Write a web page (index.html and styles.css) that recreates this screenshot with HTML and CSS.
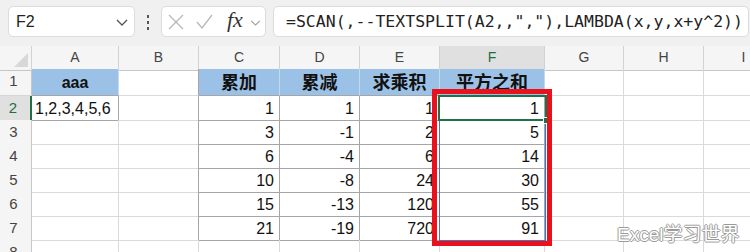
FILE: index.html
```html
<!DOCTYPE html>
<html lang="zh-CN">

<head>
  <meta charset="UTF-8">
  <link rel="stylesheet" href="styles.css">
  <title>SCAN 平方之和</title>
</head>

<body>

  <!-- 编辑栏 -->
  <div class="toolbar">
    <div class="namebox">
      <span>F2</span>
      <svg class="drop" viewBox="0 0 12 7"><polyline points="1,1 6,6 11,1" /></svg>
    </div>
    <div class="grip"><i></i><i></i><i></i></div>
    <div class="fxbox">
      <svg class="fx-x" viewBox="0 0 16 16"><line x1="1" y1="1" x2="15" y2="15" /><line x1="15" y1="1" x2="1" y2="15" /></svg>
      <svg class="fx-ok" viewBox="0 0 17 15"><polyline points="1,8 6,14 16,1" /></svg>
      <span class="fx-label">fx</span>
      <svg class="fx-drop" viewBox="0 0 12 7"><polyline points="1,1 6,6 11,1" /></svg>
    </div>
    <div class="formula">=SCAN(,--TEXTSPLIT(A2,,","),LAMBDA(x,y,x+y^2))</div>
  </div>

  <!-- 工作表 -->
  <div class="sheet">
    <div class="row hdr">
      <div class="corner"><i></i></div>
      <div class="ch">A</div><div class="ch">B</div><div class="ch">C</div><div class="ch">D</div>
      <div class="ch">E</div><div class="ch on">F</div><div class="ch">G</div><div class="ch">H</div><div class="ch">I</div>
    </div>
    <div class="row r1">
      <div class="rh">1</div>
      <div class="c b hd">aaa</div><div class="c edge"></div>
      <div class="c b hd">累加</div><div class="c b hd">累减</div><div class="c b hd">求乘积</div><div class="c b hd">平方之和</div>
      <div class="c"></div><div class="c"></div><div class="c"></div>
    </div>
    <div class="row">
      <div class="rh on">2</div>
      <div class="c t txt">1,2,3,4,5,6</div><div class="c edge"></div>
      <div class="c t n">1</div><div class="c t n">1</div><div class="c t n">1</div><div class="c t n">1</div>
      <div class="c"></div><div class="c"></div><div class="c"></div>
    </div>
    <div class="row">
      <div class="rh">3</div>
      <div class="c"></div><div class="c edge"></div>
      <div class="c t n">3</div><div class="c t n">-1</div><div class="c t n">2</div><div class="c t n">5</div>
      <div class="c"></div><div class="c"></div><div class="c"></div>
    </div>
    <div class="row">
      <div class="rh">4</div>
      <div class="c"></div><div class="c edge"></div>
      <div class="c t n">6</div><div class="c t n">-4</div><div class="c t n">6</div><div class="c t n">14</div>
      <div class="c"></div><div class="c"></div><div class="c"></div>
    </div>
    <div class="row">
      <div class="rh">5</div>
      <div class="c"></div><div class="c edge"></div>
      <div class="c t n">10</div><div class="c t n">-8</div><div class="c t n">24</div><div class="c t n">30</div>
      <div class="c"></div><div class="c"></div><div class="c"></div>
    </div>
    <div class="row">
      <div class="rh">6</div>
      <div class="c"></div><div class="c edge"></div>
      <div class="c t n">15</div><div class="c t n">-13</div><div class="c t n">120</div><div class="c t n">55</div>
      <div class="c"></div><div class="c"></div><div class="c"></div>
    </div>
    <div class="row">
      <div class="rh">7</div>
      <div class="c"></div><div class="c edge"></div>
      <div class="c t n">21</div><div class="c t n">-19</div><div class="c t n">720</div><div class="c t n">91</div>
      <div class="c"></div><div class="c"></div><div class="c"></div>
    </div>
    <div class="row">
      <div class="rh">8</div>
      <div class="c"></div><div class="c"></div><div class="c"></div><div class="c"></div><div class="c"></div>
      <div class="c"></div><div class="c"></div><div class="c"></div><div class="c"></div>
    </div>

    <!-- 溢出区域、选中框和标注 -->
    <div class="spill"></div>
    <div class="selection"><i class="handle"></i></div>
    <div class="mark"></div>
    <div class="watermark">Excel学习世界</div>
  </div>

</body>

</html>
```

FILE: styles.css
```css
body {
  margin: 0;
  font-family: "Liberation Sans", "Noto Sans CJK SC", sans-serif;
  background: #fff;
  overflow: hidden;
}

/* 编辑栏 */
.toolbar {
  display: flex;
  height: 46px;
  box-sizing: border-box;
  padding: 6px 0 0 8px;
  background: #f0f0f0;
}

.namebox,
.fxbox,
.formula {
  height: 31px;
  box-sizing: border-box;
  background: #fff;
  border: 1px solid #dcdcdc;
  border-radius: 5px;
}

.namebox {
  width: 127px;
  display: flex;
  align-items: center;
  justify-content: space-between;
  padding: 0 6px 0 7px;
  font-size: 16px;
  color: #222;
}

.drop {
  width: 12px;
  height: 7px;
  margin-top: 2px;
  fill: none;
  stroke: #555;
  stroke-width: 1.3;
}

.grip {
  width: 26px;
  display: flex;
  flex-direction: column;
  align-items: center;
  padding-top: 9px;
  gap: 3px;
}

.grip i {
  width: 2px;
  height: 3px;
  background: #555;
}

.fxbox {
  width: 105px;
  display: flex;
  align-items: center;
  padding-left: 6px;
}

.fx-x {
  width: 16px;
  height: 16px;
  stroke: #b8b8b8;
  stroke-width: 1.3;
}

.fx-ok {
  width: 17px;
  height: 15px;
  margin-left: 12px;
  fill: none;
  stroke: #b8b8b8;
  stroke-width: 1.3;
}

.fx-label {
  margin-left: 14px;
  font-family: "Liberation Serif", serif;
  font-style: italic;
  font-size: 22px;
  color: #333;
  line-height: 1;
  margin-top: -3px;
}

.fx-drop {
  width: 11px;
  height: 6px;
  margin-left: 7px;
  margin-top: 2px;
  fill: none;
  stroke: #999;
  stroke-width: 1.2;
}

.formula {
  width: 476px;
  margin-left: 7px;
  padding-left: 12px;
  font-family: "DejaVu Sans Mono", monospace;
  font-size: 16.5px;
  line-height: 29px;
  color: #222;
  white-space: nowrap;
  overflow: hidden;
}

/* 工作表 */
.sheet {
  position: relative;
}

.row {
  display: grid;
  grid-template-columns: 32px 87px 80px 81px 80px 80px 105px 79px 80px 80px;
  height: 24px;
}

.row > div {
  box-sizing: border-box;
  border-right: 1px solid #dadada;
  border-bottom: 1px solid #dadada;
}

.hdr {
  height: 23px;
}

.r1 {
  height: 27px;
}

.corner,
.ch,
.rh {
  background: #f5f5f5;
  color: #444;
}

.hdr > div {
  border-color: #d2d2d2;
  border-bottom-color: #c6c6c6;
}

.corner {
  position: relative;
}

.corner i {
  position: absolute;
  right: 3px;
  bottom: 3px;
  border-left: 14px solid transparent;
  border-bottom: 14px solid #d8d8d8;
}

.ch {
  text-align: center;
  font-size: 14px;
  line-height: 23px;
}

.rh {
  text-align: center;
  padding-right: 4px;
  font-size: 15px;
  line-height: 24px;
  border-right-color: #c6c6c6 !important;
  border-bottom-color: #d6d6d6 !important;
}

.ch.on {
  background: #e0e0e0;
  color: #1e6e42;
  border-bottom: 2px solid #1e7145;
}

.rh.on {
  background: #e0e0e0;
  color: #1e6e42;
  border-right: 2px solid #1e7145 !important;
}

.c {
  font-size: 16px;
  line-height: 24px;
  padding-top: 1px;
  color: #111;
  white-space: nowrap;
  overflow: hidden;
}

.b {
  background: #9bc2e6;
  border-right-color: #c3d9ef !important;
  border-bottom-color: #a6a6a6 !important;
}

.hd {
  text-align: center;
  font-family: "Noto Sans CJK SC", sans-serif;
  font-weight: bold;
  font-size: 18px;
  line-height: 25px;
  padding-top: 0;
}

.r1 .c:first-of-type,
.hd:first-child {
  font-family: "Liberation Sans", sans-serif;
}

.r1 .hd:nth-child(2) {
  font-family: "Liberation Sans", sans-serif;
  font-size: 16px;
  line-height: 27px;
}

.t {
  border-right-color: #a6a6a6 !important;
  border-bottom-color: #a6a6a6 !important;
}

.edge {
  border-right-color: #a6a6a6 !important;
}

.n {
  text-align: right;
  padding-right: 5px;
}

.txt {
  padding-left: 3px;
}

/* 覆盖层 */
.spill {
  position: absolute;
  left: 439px;
  top: 74px;
  width: 107px;
  height: 121px;
  box-sizing: border-box;
  border: 1px solid #4472c4;
}

.selection {
  position: absolute;
  left: 438px;
  top: 49px;
  width: 109px;
  height: 26px;
  box-sizing: border-box;
  border: 2px solid #1e7145;
}

.handle {
  position: absolute;
  right: -5px;
  bottom: -5px;
  width: 5px;
  height: 5px;
  background: #1e7145;
  border: 1px solid #fff;
}

.mark {
  position: absolute;
  left: 432px;
  top: 43px;
  width: 120px;
  height: 157px;
  box-sizing: border-box;
  border: 5px solid #e8111c;
}

.watermark {
  position: absolute;
  left: 617px;
  top: 173px;
  font-family: "Liberation Sans", "Noto Sans CJK SC", sans-serif;
  font-size: 19px;
  color: #fff;
  text-shadow: -1px 0 #9a9a9a, 1px 0 #9a9a9a, 0 -1px #9a9a9a, 0 1px #9a9a9a;
}
```
